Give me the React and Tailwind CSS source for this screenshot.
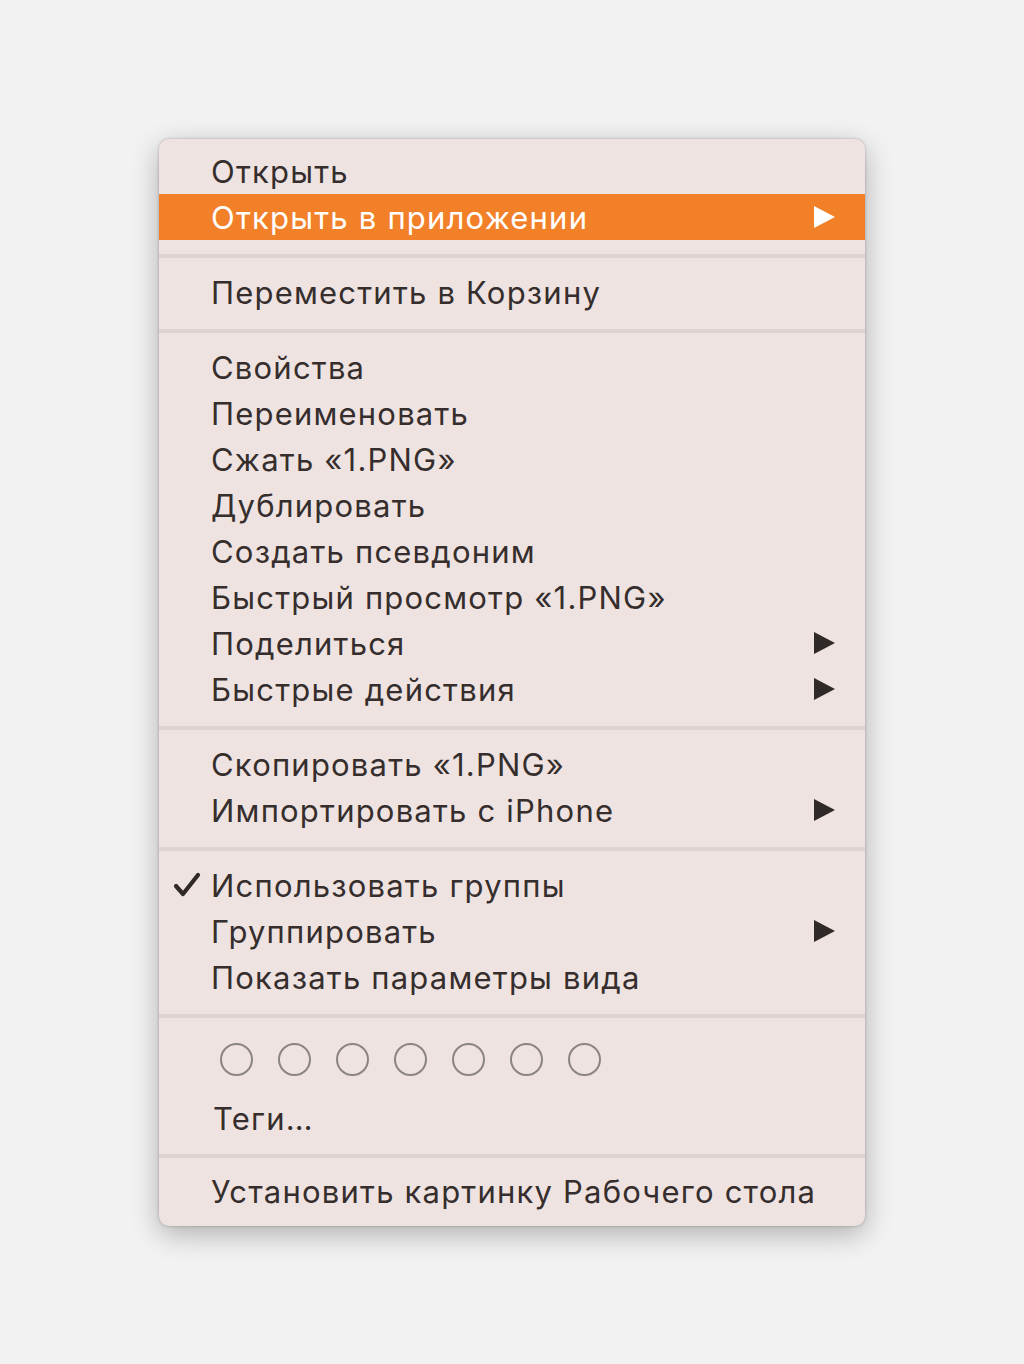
import React from 'react';

// Контекстное меню Finder: секции разделены полосками, подменю — треугольники справа.
const SECTIONS = [
    [
        { label: 'Открыть' },
        { label: 'Открыть в приложении', submenu: true, active: true },
    ],
    [{ label: 'Переместить в Корзину' }],
    [
        { label: 'Свойства' },
        { label: 'Переименовать' },
        { label: 'Сжать «1.PNG»' },
        { label: 'Дублировать' },
        { label: 'Создать псевдоним' },
        { label: 'Быстрый просмотр «1.PNG»' },
        { label: 'Поделиться', submenu: true },
        { label: 'Быстрые действия', submenu: true },
    ],
    [
        { label: 'Скопировать «1.PNG»' },
        { label: 'Импортировать с iPhone', submenu: true },
    ],
    [
        { label: 'Использовать группы', checked: true },
        { label: 'Группировать', submenu: true },
        { label: 'Показать параметры вида' },
    ],
];

function Arrow({ active }) {
    return (
        <svg width="21" height="22" viewBox="0 0 21 22" className={active ? 'text-white' : 'text-[#2f2928]'}>
            <path d="M0 0 L21 11 L0 22 Z" fill="currentColor" />
        </svg>
    );
}

function Check() {
    return (
        <svg width="28" height="26" viewBox="0 0 28 26" className="text-[#2f2928]">
            <path d="M3 14 L10 22 L25 3" fill="none" stroke="currentColor" strokeWidth="4.2" strokeLinecap="round" strokeLinejoin="round" />
        </svg>
    );
}

function Item({ item }) {
    return (
        <div className={`relative h-[46px] flex items-center pl-[52px] pr-[30px] ${item.active ? 'bg-[#f28029] text-white' : 'text-[#352e2d]'}`}>
            {item.checked && (
                <span className="absolute top-[10px] left-[14px]"><Check /></span>
            )}
            <span className="flex-1">{item.label}</span>
            {item.submenu && <Arrow active={item.active} />}
        </div>
    );
}

function Separator({ tight }) {
    return (
        <div className={tight ? 'pt-[13px] pb-[10px]' : 'pt-[14px] pb-[11px]'}>
            <div className="h-[4px] bg-[#ddd3d1]" />
        </div>
    );
}

export default function App() {
    return (
        <div className="min-h-screen bg-[#f2f2f2] pt-[139px] pl-[159px]" style={{ fontFamily: 'Inter, "Noto Sans", sans-serif' }}>
            <div className="w-[706px] bg-[#efe3e1] rounded-[10px] shadow-[0_8px_28px_rgba(0,0,0,0.28),0_0_3px_rgba(0,0,0,0.25)] pt-[9px] pb-[12px] text-[31px] leading-none tracking-[1.2px]">
                {SECTIONS.map((section, i) => (
                    <React.Fragment key={i}>
                        {i > 0 && <Separator />}
                        {section.map((item) => <Item key={item.label} item={item} />)}
                    </React.Fragment>
                ))}
                <Separator />
                <div className="pl-[61px] pt-[14px] flex gap-[25px]">
                    {[0, 1, 2, 3, 4, 5, 6].map((n) => (
                        <div key={n} className="w-[33px] h-[33px] rounded-full border-2 border-[#8a8584]" />
                    ))}
                </div>
                <div className="h-[46px] mt-[19px] flex items-center pl-[54px] text-[#352e2d]">Теги…</div>
                <Separator tight />
                <div className="h-[46px] flex items-center pl-[52px] text-[#352e2d]">Установить картинку Рабочего стола</div>
            </div>
        </div>
    );
}
